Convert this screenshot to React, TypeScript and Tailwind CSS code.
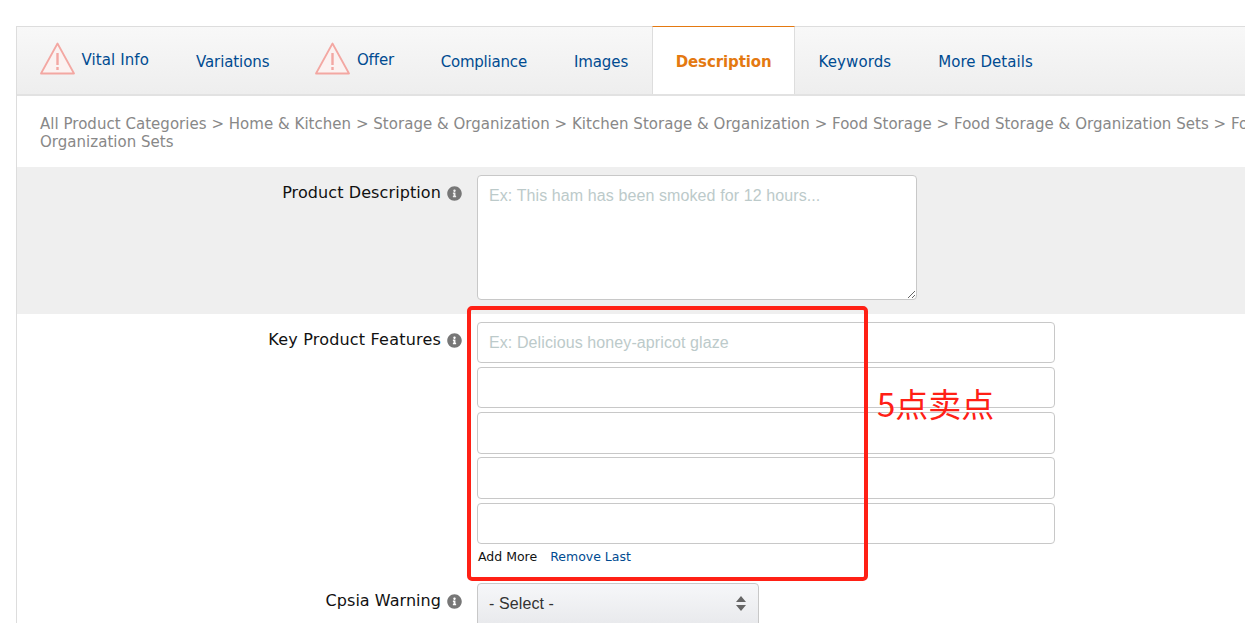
import { FaInfoCircle } from 'react-icons/fa'

const font = { fontFamily: '"DejaVu Sans", sans-serif' }
const arial = { fontFamily: '"Liberation Sans", sans-serif' }

function WarnIcon() {
  return (
    <svg width="35" height="33" viewBox="0 0 35 33" className="shrink-0 mb-[5px] -ml-[0.5px] mr-[0.5px]">
      <path d="M17.5 1.5 L34 31.5 H1 Z" fill="#fbf2f1" stroke="#f3a7a2" strokeWidth="1.8" strokeLinejoin="round" />
      <path d="M17.5 11 V23" stroke="#f3a7a2" strokeWidth="2.4" />
      <path d="M17.5 25 V28" stroke="#f3a7a2" strokeWidth="2.4" />
    </svg>
  )
}

function Tab({ label, className }: { label: string; className: string }) {
  return <div className={`flex items-center h-full pt-[3px] text-[#004b91] text-[15px] ${className}`}>{label}</div>
}

function WarnTab({ label, className }: { label: string; className: string }) {
  return (
    <div className={`flex items-center h-full gap-[6px] text-[#004b91] text-[15px] ${className}`}>
      <WarnIcon />
      <span>{label}</span>
    </div>
  )
}

function Label({ text, className }: { text: string; className: string }) {
  return (
    <div className={`w-[460px] h-[36px] shrink-0 flex justify-end items-center gap-[6px] pr-[15px] text-[16px] text-[#111] ${className}`}>
      <span>{text}</span>
      <FaInfoCircle className="text-[#777] text-[15px] shrink-0" />
    </div>
  )
}

const inputCls =
  'block w-[578px] border border-[#c8c8c8] rounded-[4px] bg-white px-[11px] text-[16px] tracking-[0.1px] outline-none placeholder:text-[#bccaca]'

export default function App() {
  return (
    <div className="relative h-[623px] w-[1245px] overflow-hidden bg-white" style={font}>
      <div className="ml-4 mt-[26px] w-[1500px] border-l border-t border-[#ddd]">
        <div className="flex items-center h-[69px] border-b-2 border-[#e2e2e2] bg-gradient-to-b from-[#f8f8f8] to-[#eeeeee]">
          <WarnTab label="Vital Info" className="px-[23.5px] tracking-[0.1px]" />
          <Tab label="Variations" className="px-[23.5px] tracking-[-0.1px]" />
          <WarnTab label="Offer" className="px-[23px] tracking-[-0.1px]" />
          <Tab label="Compliance" className="px-[23.5px] tracking-[-0.2px]" />
          <Tab label="Images" className="px-[23.5px] tracking-[-0.1px]" />
          <div className="flex items-center self-start h-[68px] -mt-px pt-[3px] pl-[23px] pr-[22px] bg-white border-x border-[#ddd] border-t border-t-[#e47911] text-[15px] font-bold tracking-[-0.1px] text-[#e47911]">
            Description
          </div>
          <Tab label="Keywords" className="pl-[24px] pr-[23.5px] tracking-[0.1px]" />
          <Tab label="More Details" className="px-[23.5px] tracking-[0.05px]" />
        </div>

        <div className="pl-[23px] pt-[19px] pb-[16px] text-[15px] leading-[18px] text-[#888] tracking-[0.03px] whitespace-nowrap">
          All Product Categories &gt; Home &amp; Kitchen &gt; Storage &amp; Organization &gt; Kitchen Storage &amp; Organization &gt; Food Storage &gt; Food Storage &amp; Organization Sets &gt; Food Storage &amp;
          <br />
          Organization Sets
        </div>

        <div className="flex h-[147px] bg-[#efefef] pt-2">
          <Label text="Product Description" className="tracking-[0.1px]" />
          <textarea
            placeholder="Ex: This ham has been smoked for 12 hours..."
            className="block w-[440px] h-[125px] border border-[#c8c8c8] rounded-[4px] bg-white px-[11px] py-[8px] text-[16px] tracking-[0.1px] outline-none placeholder:text-[#bccaca]"
            style={arial}
          />
        </div>

        <div className="flex pt-2">
          <Label text="Key Product Features" className="tracking-[0.2px]" />
          <div className="flex flex-col gap-1" style={arial}>
            <input className={`${inputCls} h-[41px]`} placeholder="Ex: Delicious honey-apricot glaze" />
            <input className={`${inputCls} h-[41px]`} />
            <input className={`${inputCls} h-[42px] -mb-px`} />
            <input className={`${inputCls} h-[42px]`} />
            <input className={`${inputCls} h-[41px]`} />
            <div className="flex gap-[13px] pl-px text-[12.5px] leading-[18px]" style={font}>
              <span className="text-[#111]">Add More</span>
              <span className="text-[#004b91]">Remove Last</span>
            </div>
          </div>
        </div>

        <div className="flex mt-[17px]">
          <Label text="Cpsia Warning" className="tracking-[0.05px]" />
          <div
            className="relative w-[282px] h-[44px] rounded-[4px] border border-[#c8c8c8] bg-gradient-to-b from-[#f6f7f9] to-[#e8e9ec] flex items-center px-[11px] pb-[2px] text-[16px] tracking-[0.1px] text-[#333]"
            style={arial}
          >
            - Select -
            <svg width="10" height="15" viewBox="0 0 10 15" className="absolute right-[12px] top-[12px]">
              <path d="M5 0 L10 6 H0 Z M5 15 L0 9 H10 Z" fill="#666" />
            </svg>
          </div>
        </div>
      </div>

      {/* red annotation drawn over the screenshot */}
      <div className="absolute left-[467px] top-[306px] w-[401px] h-[275px] border-[4px] border-[#ff2015] rounded-[5px]" />
      <div
        className="absolute left-[877px] top-[380px] text-[33px] leading-[46px] text-[#ff2015]"
        style={{ fontFamily: '"Noto Sans CJK SC", sans-serif' }}
      >
        5点卖点
      </div>
    </div>
  )
}
